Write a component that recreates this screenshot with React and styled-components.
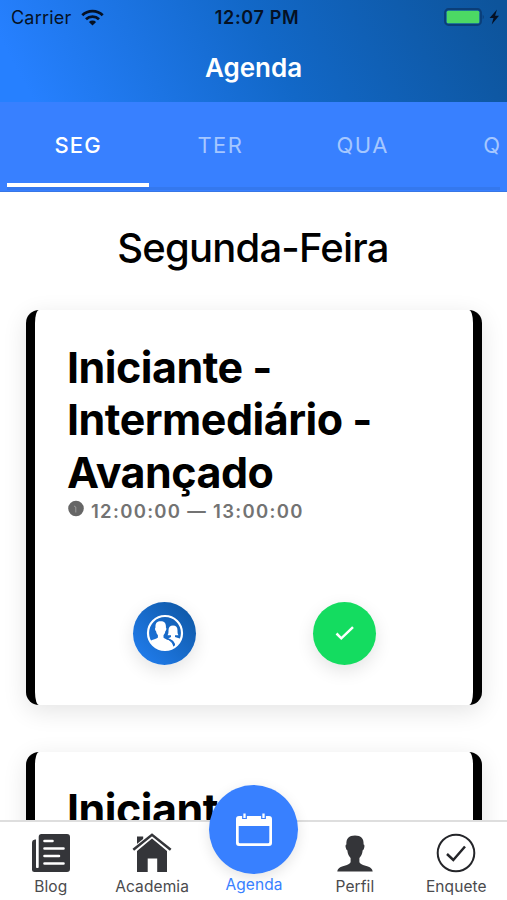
import React from "react"
import styled, { createGlobalStyle } from "styled-components"

const GlobalStyle = createGlobalStyle`
  * {
    box-sizing: border-box;
  }
  body {
    margin: 0;
    background: #fff;
    font-family: Inter, "Liberation Sans", sans-serif;
    color: #000;
  }
  svg {
    display: block;
    flex: none;
  }
`

const Screen = styled.div`
  display: flex;
  flex-direction: column;
  width: 507px;
  height: 900px;
  overflow: hidden;
  background: #fff;
`

const Header = styled.header`
  flex: none;
  height: 102px;
  background: linear-gradient(62deg, #2680ff 6%, #1268c8 53%, #0d549b 98%);
`

const StatusBar = styled.div`
  display: grid;
  grid-template-columns: 1fr auto 1fr;
  align-items: center;
  height: 34px;
  padding: 0 7px 0 11px;
  font-size: 18px;
  color: #051124;
  .carrier {
    display: flex;
    align-items: center;
    gap: 10px;
    letter-spacing: 0.2px;
  }
  .time {
    font-weight: 600;
    letter-spacing: 0.65px;
    transform: translateX(1.5px);
  }
  .battery {
    justify-self: end;
  }
`

const PageTitle = styled.h1`
  margin: 0;
  line-height: 68px;
  text-align: center;
  font-size: 26px;
  font-weight: 600;
  color: #fff;
`

const Tabs = styled.nav`
  flex: none;
  height: 90px;
  padding: 0 7px;
  background: #3880ff;
  border-bottom: 1px solid #3777e6;
`

const TabList = styled.div`
  display: flex;
  height: 88px;
  overflow: hidden;
  border-bottom: 3px solid #3478ee;
`

const Tab = styled.button`
  flex: none;
  width: 142.3px;
  height: 85px;
  padding: 4px 0 0;
  border: none;
  border-bottom: 4px solid ${(p) => (p.$active ? "#fff" : "transparent")};
  background: none;
  font-family: inherit;
  font-size: 22px;
  font-weight: ${(p) => (p.$active ? 500 : 400)};
  letter-spacing: ${(p) => (p.$active ? "1.2px" : "1.5px")};
  color: ${(p) => (p.$active ? "#fff" : "#a5c7ff")};
`

const Content = styled.main`
  flex: 1;
  min-height: 0;
  overflow: hidden;
  padding: 0 25px 0 26px;
`

const Day = styled.h2`
  margin: 0;
  height: 118px;
  line-height: 111px;
  text-align: center;
  font-size: 40px;
  font-weight: 450;
  letter-spacing: -0.8px;
  text-indent: -2px;
`

const Card = styled.article`
  display: flex;
  flex-direction: column;
  height: 394.5px;
  margin-bottom: 47.5px;
  padding: 31px 32px 0;
  border: solid #000;
  border-width: 0 9.5px;
  border-radius: 13px;
  background: #fff;
  box-shadow: 0 6px 25px rgba(0, 0, 0, 0.11);
`

const CardTitle = styled.h3`
  margin: 0;
  font-size: 43px;
  line-height: 52.3px;
  font-weight: 700;
  letter-spacing: -0.5px;
  white-space: nowrap;
`

const Schedule = styled.p`
  display: flex;
  align-items: center;
  gap: 7px;
  margin: 1px 0 0 1px;
  font-size: 18.5px;
  line-height: 24px;
  font-weight: 600;
  letter-spacing: 1.3px;
  white-space: nowrap;
  color: #737373;
`

const Actions = styled.div`
  display: flex;
  justify-content: space-between;
  margin: 79px 65px 0 66px;
`

const RoundButton = styled.button`
  display: flex;
  align-items: center;
  justify-content: center;
  width: 63px;
  height: 63px;
  padding: 0;
  border: none;
  border-radius: 50%;
  background: ${(p) => p.$fill};
  box-shadow: 0 6px 18px rgba(0, 0, 0, 0.11);
`

const TabBar = styled.footer`
  display: grid;
  grid-template-columns: repeat(5, 1fr);
  flex: none;
  height: 80px;
  border-top: 2px solid #dedede;
  background: #fff;
  position: relative;
`

const TabBarItem = styled.a`
  display: flex;
  flex-direction: column;
  align-items: center;
  padding-top: 11px;
  font-size: 15.5px;
  letter-spacing: 0.1px;
  color: #4a4a4d;
  span {
    line-height: 20px;
    margin-top: 4px;
  }
`

const AgendaItem = styled(TabBarItem)`
  color: #3880ff;
  padding: 0 0 0 1px;
  margin-top: -37px;
  span {
    margin-top: 1px;
  }
`

const Bubble = styled.div`
  display: flex;
  align-items: center;
  justify-content: center;
  width: 89px;
  height: 89px;
  border-radius: 50%;
  background: #3880ff;
  box-shadow: 0 4px 14px rgba(0, 0, 0, 0.11);
`

const WifiIcon = () => (
  <svg width="23" height="17" viewBox="0 0 23 17" fill="none" stroke="currentColor" strokeWidth="2.8">
    <path d="M1.3 6.3a14.6 14.6 0 0 1 20.4 0" />
    <path d="M5 10.2a9.4 9.4 0 0 1 13 0" />
    <path d="M11.5 16.5 7.9 13a5.2 5.2 0 0 1 7.2 0z" fill="currentColor" stroke="none" />
  </svg>
)

const BatteryIcon = () => (
  <svg className="battery" width="56" height="20" viewBox="0 0 56 20">
    <rect x="1" y="2" width="36" height="16" rx="3.5" fill="none" stroke="#0b3e78" strokeWidth="1.8" />
    <rect x="2.7" y="3.7" width="32.6" height="12.6" rx="1.5" fill="#4cd964" />
    <path d="M38.7 7.5q2.2 2.5 0 5z" fill="#0b3e78" />
    <path d="m53 2.5-7.4 8.6h3.9l-1.8 6.3 7.3-8.6h-3.9z" fill="#051124" />
  </svg>
)

const ClockIcon = () => (
  <svg width="16" height="24" viewBox="0 0 16 24">
    <circle cx="8" cy="9.5" r="7.8" fill="#666" />
    <path d="m6 7 1.8 1v5.5" fill="none" stroke="#aaa" strokeWidth="0.8" />
  </svg>
)

const PeopleIcon = () => (
  <svg width="38" height="38" viewBox="0 0 38 38">
    <defs>
      <clipPath id="people">
        <circle cx="19" cy="19" r="17" />
      </clipPath>
    </defs>
    <g clipPath="url(#people)" fill="#fff">
      <path d="M27 11.500C24 11.500 22.500 13.300 22.500 16.200C22.500 18.500 22.400 20 21.500 21.300H25V23L22 24.500L29 30V38H38V26L29 23V21.300H32.500C31.600 20 31.500 18.500 31.500 16.200C31.500 13.300 30 11.500 27 11.500Z" />
      <path d="M14.700 7.300C10.800 7.300 9.200 9.500 9.500 13.400C8.700 14 9 16.600 10 17.100C10.300 19 10.900 20.200 11.900 21.200V23.500C11 25.300 5 25.500 2 28.500V38H27.500C28.500 29 24 26.500 20.500 25.200C18.500 24.500 17.800 24.200 17.500 23.500V21.200C18.500 20.200 19.100 19 19.400 17.100C20.400 16.600 20.700 14 19.900 13.400C20.200 9.500 18.600 7.300 14.700 7.300Z" />
      <path d="M20 24.300C25 25.800 28.600 27.500 28.300 33" fill="none" stroke="#1768c8" strokeWidth="1.500" />
    </g>
    <circle cx="19" cy="19" r="17" fill="none" stroke="#fff" strokeWidth="2.200" />
  </svg>
)

const CheckIcon = () => (
  <svg width="22" height="20" viewBox="0 0 22 20">
    <path d="m2.5 10.5 4.800 4.800L19 4.200" fill="none" stroke="#fff" strokeWidth="2.500" />
  </svg>
)

const BlogIcon = () => (
  <svg width="40" height="40" viewBox="0 0 40 40">
    <path d="M10.500 1h25.500a3 3 0 0 1 3 3v32a3 3 0 0 1-3 3H3.500A2.500 2.500 0 0 1 1 36.500V10a3.500 3.500 0 0 1 3-3.500h1v27.700a1.500 1.500 0 0 0 2.700 0V4a3 3 0 0 1 2.800-3z" fill="#343539" />
    <path d="M13.500 8h8M13.500 15.500h19M13.500 23h14.500M13.500 30.500h19" stroke="#fff" strokeWidth="2.600" strokeLinecap="round" />
  </svg>
)

const HomeIcon = () => (
  <svg width="40" height="40" viewBox="0 0 40 40">
    <path d="M5 3.500h6.200V8L5 13.500z" fill="#343539" />
    <path d="M20 5.500 35 18v21h-9.800V25.500h-9.500V39H5V18z" fill="#343539" />
    <path d="M1.200 17 20 1.600 38.800 17" fill="none" stroke="#fff" strokeWidth="4.500" />
    <path d="M1.300 16.800 20 1.800l18.700 15" fill="none" stroke="#343539" strokeWidth="2.500" />
  </svg>
)

const CalendarIcon = () => (
  <svg width="38" height="38" viewBox="0 0 38 38">
    <path
      d="M4 5h30a3 3 0 0 1 3 3v24a3 3 0 0 1-3 3H4a3 3 0 0 1-3-3V8a3 3 0 0 1 3-3zM3.700 15v16a1.300 1.300 0 0 0 1.300 1.300h28a1.300 1.300 0 0 0 1.300-1.300V15z"
      fill="#fff"
      fillRule="evenodd"
    />
    <path d="M9.500 4v4M28.500 4v4" stroke="#3880ff" strokeWidth="4.800" />
    <path d="M9.500 2.500v4.500M28.500 2.500v4.500" stroke="#fff" strokeWidth="2.300" />
  </svg>
)

const ProfileIcon = () => (
  <svg width="40" height="40" viewBox="0 0 40 40" fill="#343539">
    <path d="M20 2.500c-6 0-9 3.100-8.600 9-.9.100-1.100 1.300-.6 3.200.4 1.500.8 2.500 1.500 2.600.5 4 1.600 6 3.300 7.700v4c0 1.500-2.600 2.700-6.100 3.700C4.800 34 2.700 35.500 2.300 38.500h35.400c-.4-3-2.500-4.500-7.200-5.800-3.500-1-6.100-2.200-6.100-3.700v-4c1.700-1.700 2.800-3.700 3.300-7.700.7-.1 1.100-1.100 1.500-2.600.5-1.900.3-3.100-.6-3.200.4-5.900-2.600-9-8.600-9z" />
  </svg>
)

const SurveyIcon = () => (
  <svg width="40" height="40" viewBox="0 0 40 40" fill="none" stroke="#242529">
    <circle cx="20" cy="20" r="18.300" strokeWidth="2" />
    <path d="m11 21 6.300 6L29 13.500" strokeWidth="2.500" />
  </svg>
)

const days = ["SEG", "TER", "QUA", "QUI"]

const classes = [
  { title: ["Iniciante -", "Intermediário -", "Avançado"], start: "12:00:00", end: "13:00:00" },
  { title: ["Iniciante"], start: "13:00:00", end: "14:00:00" },
]

function ClassCard({ item }) {
  return (
    <Card>
      <CardTitle>
        {item.title.map((line) => (
          <div key={line}>{line}</div>
        ))}
      </CardTitle>
      <Schedule>
        <ClockIcon />
        {item.start} — {item.end}
      </Schedule>
      <Actions>
        <RoundButton $fill="linear-gradient(45deg, #2280f4, #0d559f)">
          <PeopleIcon />
        </RoundButton>
        <RoundButton $fill="#14dc60">
          <CheckIcon />
        </RoundButton>
      </Actions>
    </Card>
  )
}

export default function App() {
  const [day, setDay] = React.useState("SEG")

  return (
    <>
      <GlobalStyle />
      <Screen>
        <Header>
          <StatusBar>
            <div className="carrier">
              Carrier <WifiIcon />
            </div>
            <div className="time">12:07 PM</div>
            <BatteryIcon />
          </StatusBar>
          <PageTitle>Agenda</PageTitle>
        </Header>
        <Tabs>
          <TabList>
            {days.map((d) => (
              <Tab key={d} $active={d === day} onClick={() => setDay(d)}>
                {d}
              </Tab>
            ))}
          </TabList>
        </Tabs>
        <Content>
          <Day>Segunda-Feira</Day>
          {classes.map((c, i) => (
            <ClassCard key={i} item={c} />
          ))}
        </Content>
        <TabBar>
          <TabBarItem>
            <BlogIcon />
            <span>Blog</span>
          </TabBarItem>
          <TabBarItem>
            <HomeIcon />
            <span>Academia</span>
          </TabBarItem>
          <AgendaItem>
            <Bubble>
              <CalendarIcon />
            </Bubble>
            <span>Agenda</span>
          </AgendaItem>
          <TabBarItem>
            <ProfileIcon />
            <span>Perfil</span>
          </TabBarItem>
          <TabBarItem>
            <SurveyIcon />
            <span>Enquete</span>
          </TabBarItem>
        </TabBar>
      </Screen>
    </>
  )
}
